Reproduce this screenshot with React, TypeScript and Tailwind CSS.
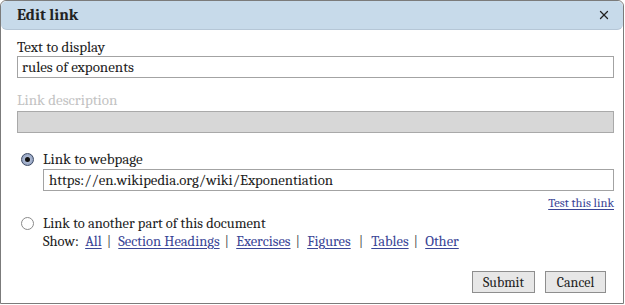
import { X } from 'lucide-react';

function Radio({ checked }: { checked: boolean }) {
  return checked ? (
    <span className="flex h-[13px] w-[13px] items-center justify-center rounded-full border border-[#3d4a63] bg-[radial-gradient(circle,#c9d3e6_0%,#7f90b3_100%)]">
      <span className="h-[5px] w-[5px] rounded-full bg-[#111]" />
    </span>
  ) : (
    <span className="block h-[13px] w-[13px] rounded-full border border-[#8a8a8a] bg-white" />
  );
}

function Sep() {
  return <span className="ml-[5px] mr-[7px] text-[#555]">|</span>;
}

function A({ children }: { children: string }) {
  return <a className="text-[#3a4596] underline underline-offset-2 decoration-1">{children}</a>;
}

export default function App() {
  return (
    <div className="font-serif h-[304px] w-[624px] rounded-t-[6px] border border-[#7b7b7b] bg-white text-[15px] leading-[17px] text-[#222]">
      {/* header */}
      <div className="flex h-[29px] items-center justify-between rounded-[6px] bg-[#c7daea] pl-[16px] pr-[12px] border-b border-[#b5c6d6]">
        <span className="text-[16px] font-bold text-[#222]">Edit link</span>
        <X size={14} strokeWidth={2.25} className="text-[#222]" />
      </div>

      <div className="pl-[16px] pr-[9px]">
        <div className="mt-[9px]">Text to display</div>
        <div className="flex h-[22px] items-center border border-[#a3a3a3] px-[4px]">rules of exponents</div>

        <div className="mt-[14px] text-[#c3c3c3]">Link description</div>
        <div className="mt-[2px] h-[22px] border border-[#a9a9a9] bg-[#d7d7d7]" />

        {/* link to webpage */}
        <div className="mt-[18px] flex">
          <div className="w-[26px] pl-[4px] pt-[2px]">
            <Radio checked />
          </div>
          <div className="flex-1">
            <div>Link to webpage</div>
            <div className="mt-[1px] flex h-[22px] items-center border border-[#a3a3a3] px-[5px] text-[14.8px]">
              https://en.wikipedia.org/wiki/Exponentiation
            </div>
            <div className="mt-[4px] flex justify-end text-[12.5px]">
              <A>Test this link</A>
            </div>
          </div>
        </div>

        {/* link to document part */}
        <div className="mt-[3px] flex text-[14.5px]">
          <div className="w-[26px] pl-[4px] pt-[2px]">
            <Radio checked={false} />
          </div>
          <div className="flex-1">
            <div>Link to another part of this document</div>
            <div className="mt-[1px]">
              Show:&nbsp; <A>All</A>
              <Sep />
              <A>Section Headings</A>
              <Sep />
              <A>Exercises</A>
              <Sep />
              <A>Figures</A>
              <span className="ml-[8px] mr-[8px] text-[#555]">|</span>
              <A>Tables</A>
              <Sep />
              <A>Other</A>
            </div>
          </div>
        </div>

        <div className="mt-[21px] flex justify-end gap-[10px] pr-[8px]">
          <button className="h-[22px] w-[63px] border border-[#8e8e8e] bg-[#e7e7e7] text-[14px]">Submit</button>
          <button className="h-[22px] w-[61px] border border-[#8e8e8e] bg-[#e7e7e7] text-[14px]">Cancel</button>
        </div>
      </div>
    </div>
  );
}
